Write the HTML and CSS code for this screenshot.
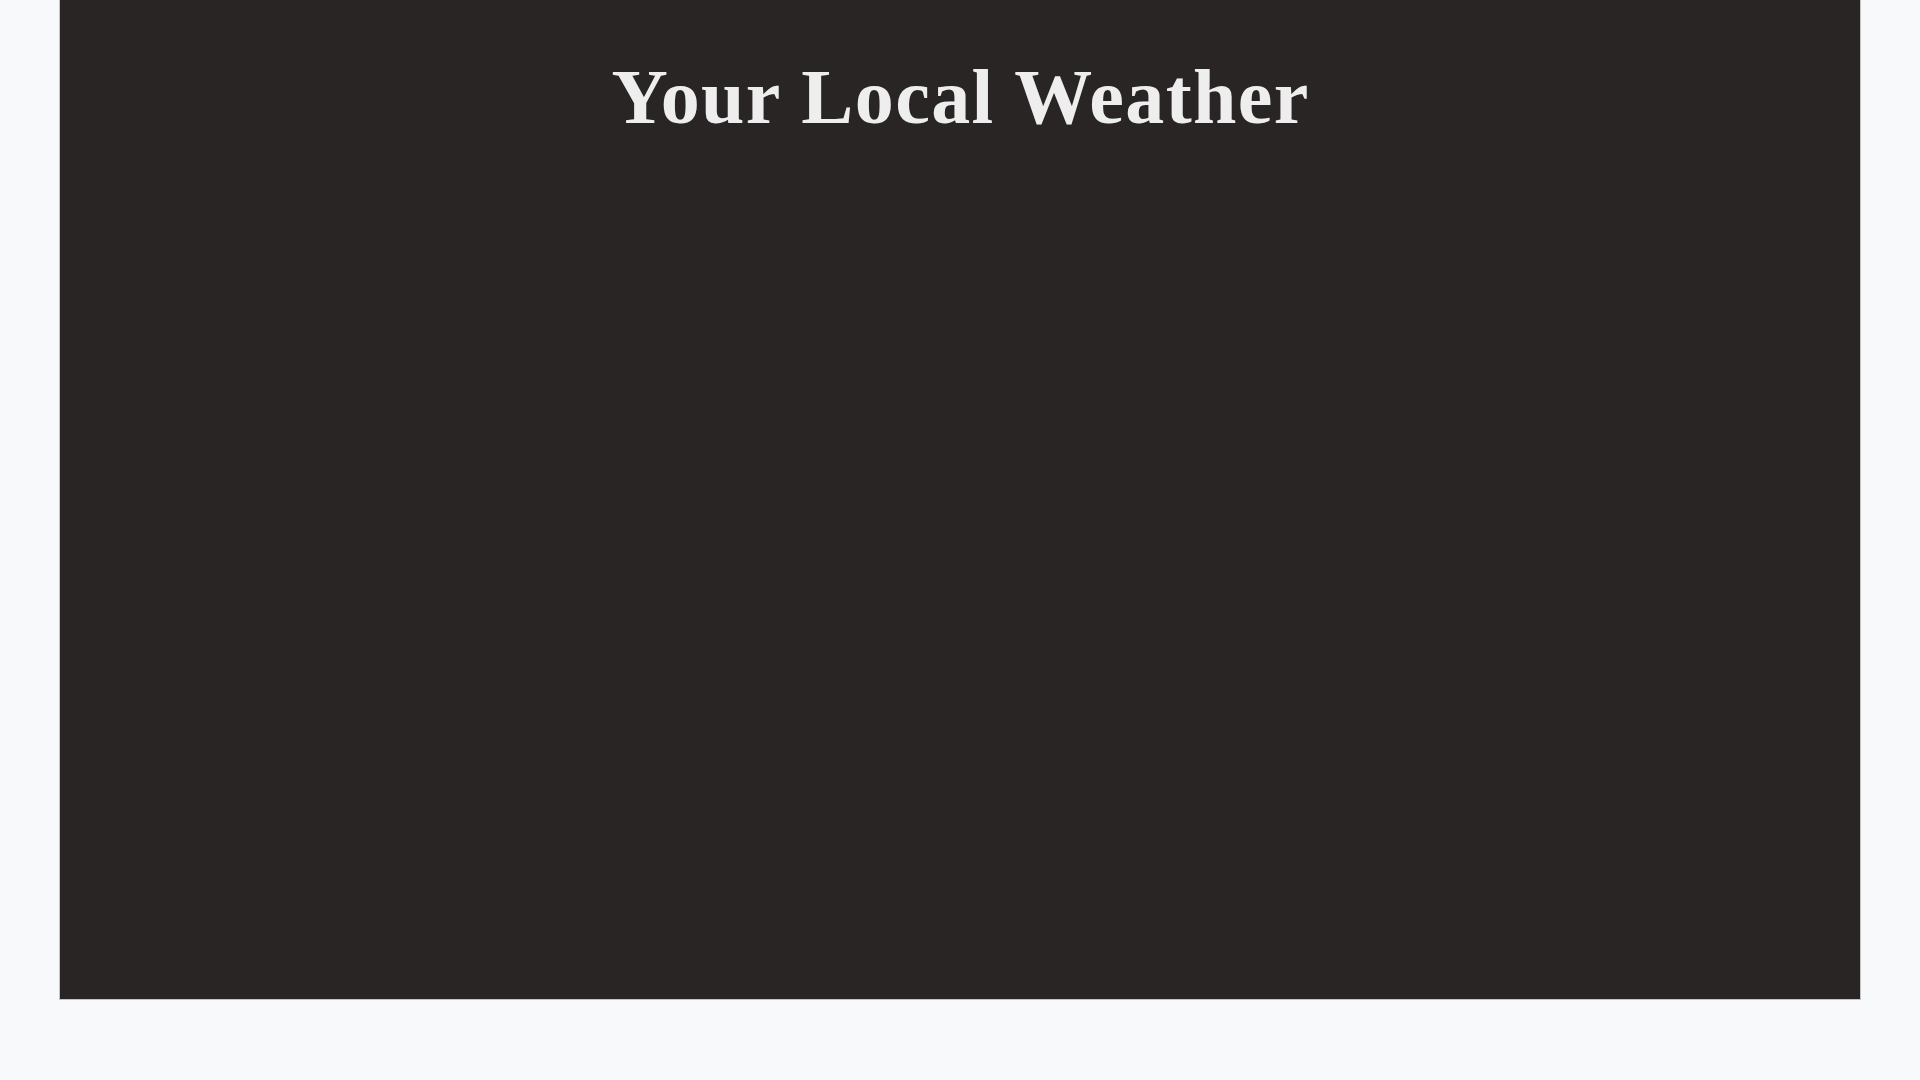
FILE: index.html
```html
<!DOCTYPE html>
<html lang="en">
<head>
<meta charset="utf-8">
<title>Your Local Weather</title>
<link rel="stylesheet" href="styles.css">
</head>
<body>
<main class="panel">
  <h1 class="title">Your Local Weather</h1>
</main>
</body>
</html>
```
FILE: styles.css
```css
html, body {
  margin: 0;
  padding: 0;
}
body {
  background: #f8f9fb;
  font-family: "Liberation Serif", "Times New Roman", serif;
  min-height: 1080px;
}
.panel {
  margin: 0 59px;
  height: 1000px;
  box-sizing: border-box;
  background: #292524;
  border: 1px solid #c4c4c4;
  border-top: 0;
  display: flex;
  flex-direction: column;
  align-items: center;
}
.title {
  margin: 52px 0 0;
  padding-left: 1.4px;
  font-size: 78px;
  font-weight: bold;
  letter-spacing: 1.4px;
  color: #eeeeee;
  text-align: center;
}
```
